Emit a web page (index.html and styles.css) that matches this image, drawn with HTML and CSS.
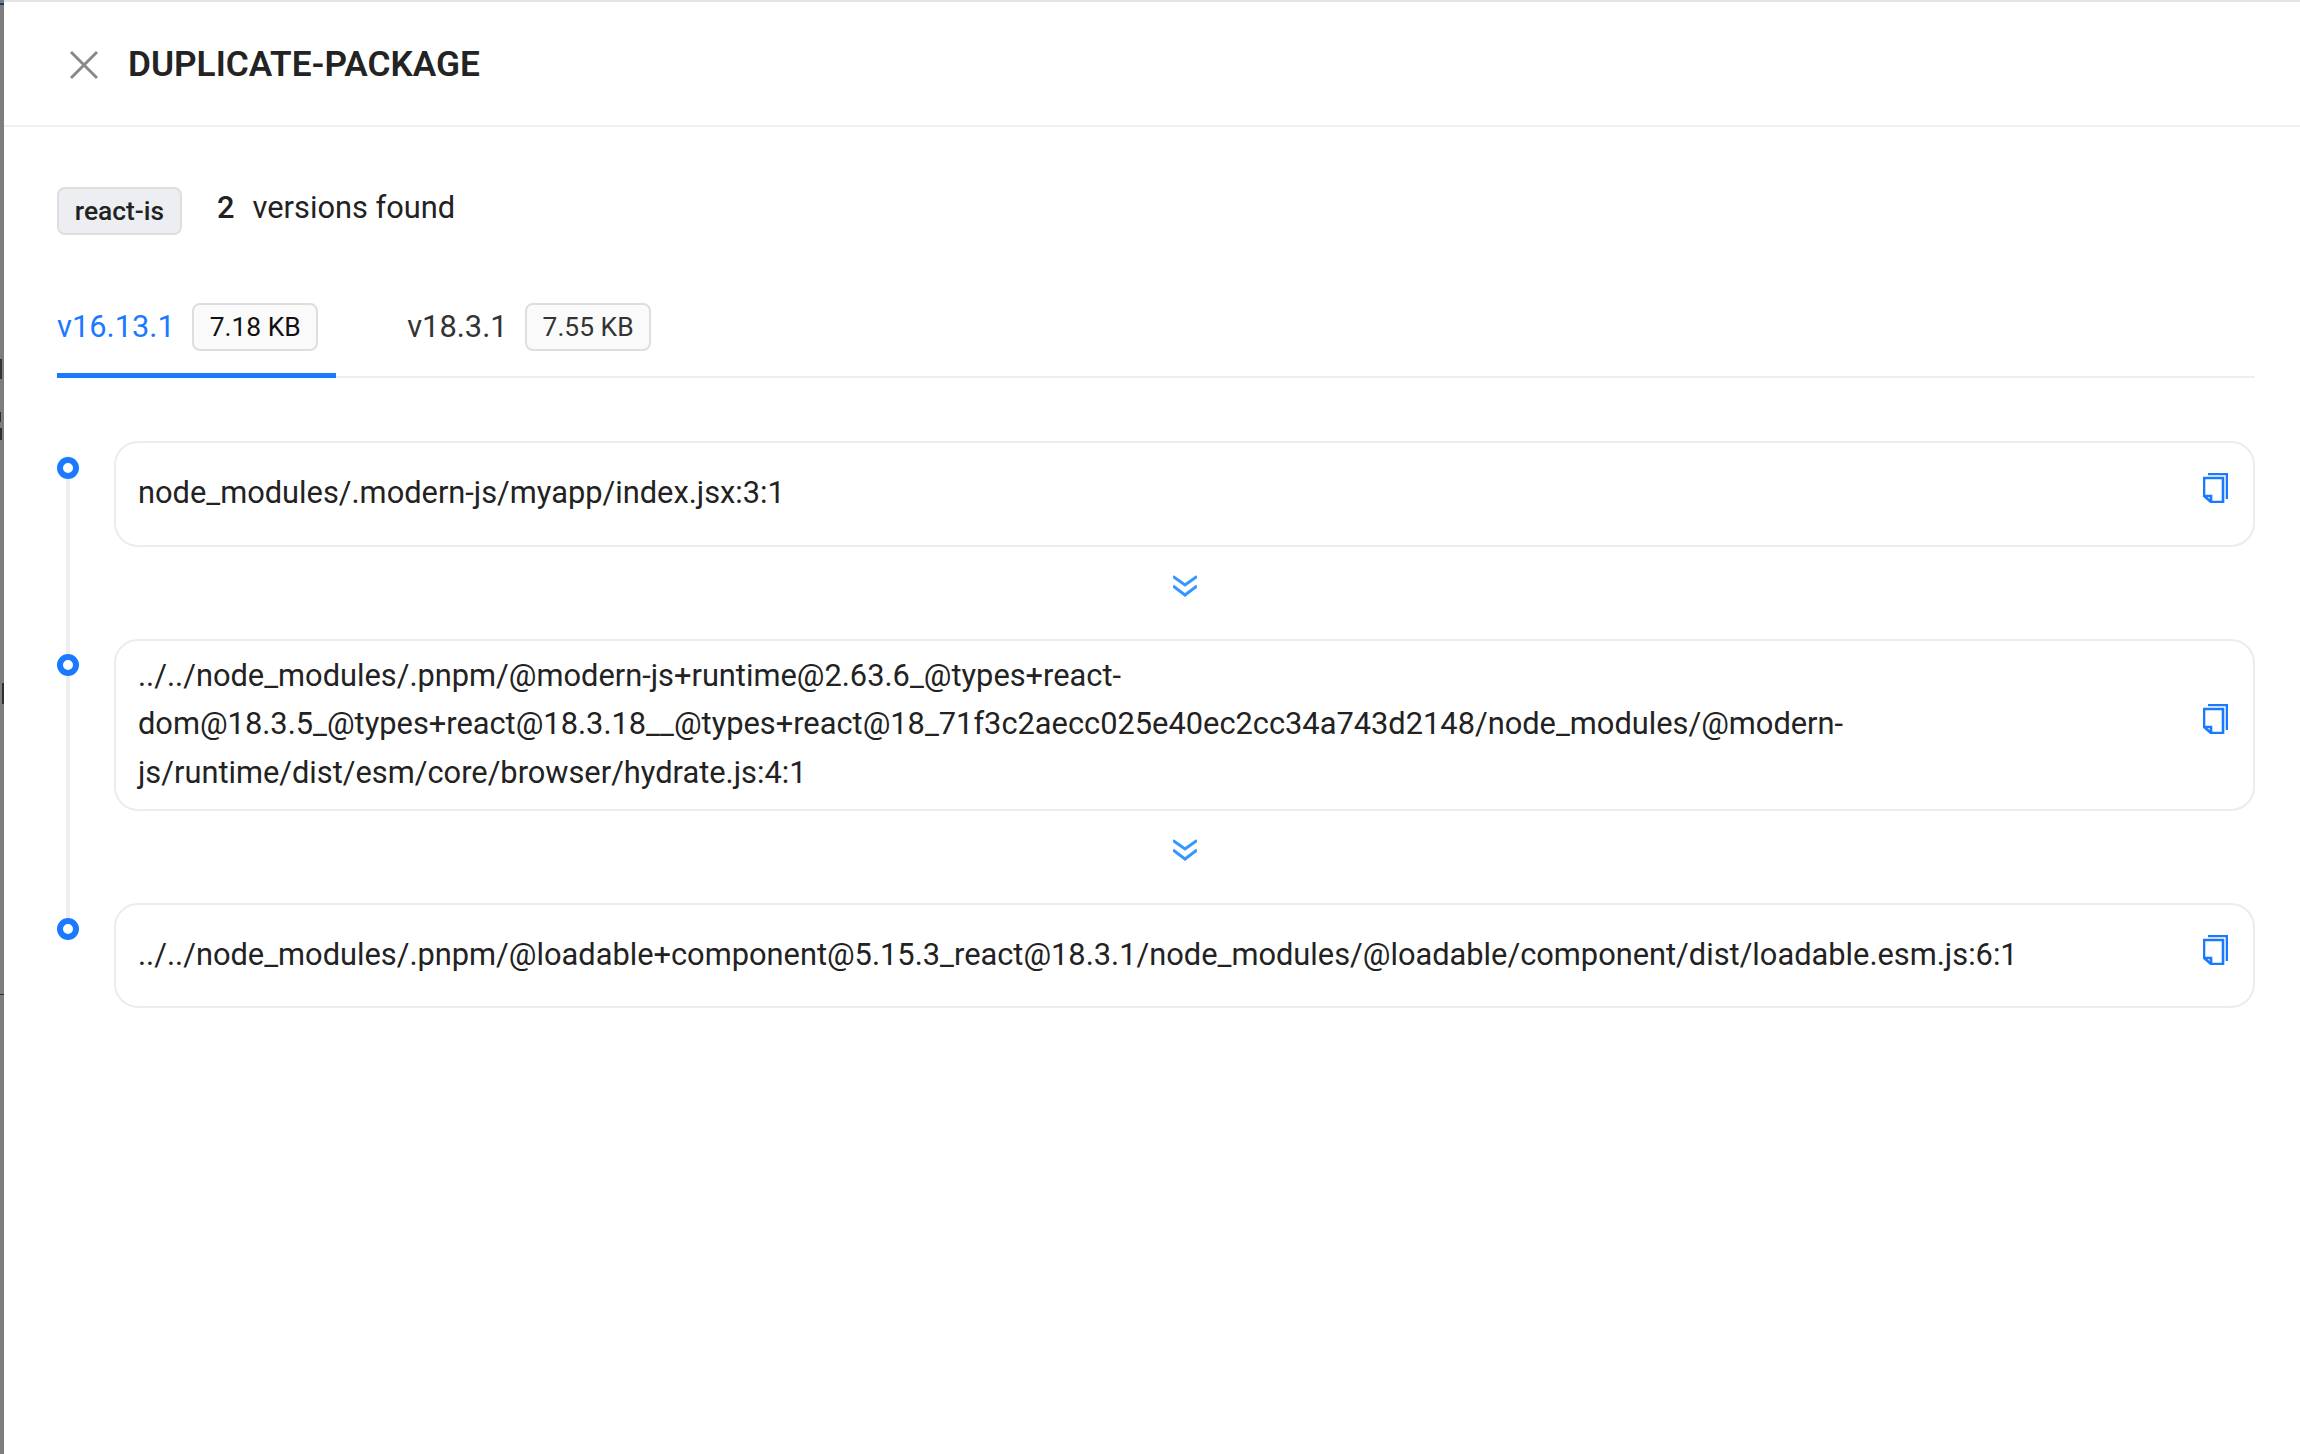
FILE: index.html
```html
<!DOCTYPE html>
<html lang="en">
<head>
<meta charset="utf-8">
<title>DUPLICATE-PACKAGE</title>
<link rel="stylesheet" href="styles.css">
</head>
<body>
<div class="page">
  <div class="backdrop">
    <i class="mark m-top"></i><i class="mark m-a"></i><i class="mark m-b"></i><i class="mark m-c"></i><i class="mark m-d"></i><i class="mark m-e"></i>
  </div>
  <main class="drawer">
    <header class="drawer-head">
      <svg class="close" viewBox="0 0 30 30" aria-hidden="true"><path d="M2 2 28 28M28 2 2 28"/></svg>
      <h1>DUPLICATE-PACKAGE</h1>
    </header>
    <section class="body">
      <div class="summary">
        <span class="tag name">react-is</span>
        <span class="count"><b>2</b>versions found</span>
      </div>
      <nav class="tabs">
        <div class="tab active"><span>v16.13.1</span><span class="tag size">7.18 KB</span></div>
        <div class="tab"><span>v18.3.1</span><span class="tag size">7.55 KB</span></div>
      </nav>
      <ol class="timeline">
        <li class="step">
          <div class="card"><p>node_modules/.modern-js/myapp/index.jsx:3:1</p>
            <svg class="copy" viewBox="0 0 25 30" aria-hidden="true"><path d="M5 1H24V26"/><path d="M1 5H20V29H8L1 23ZM1 23H8V29"/></svg>
          </div>
          <svg class="chev" viewBox="0 0 24 22" aria-hidden="true"><path d="M0 1.500 12 10 24 1.500M0 11 12 20 24 11"/></svg>
        </li>
        <li class="step">
          <div class="card"><p>../../node_modules/.pnpm/@modern-js+runtime@2.63.6_@types+react-<br>dom@18.3.5_@types+react@18.3.18__@types+react@18_71f3c2aecc025e40ec2cc34a743d2148/node_modules/@modern-<br>js/runtime/dist/esm/core/browser/hydrate.js:4:1</p>
            <svg class="copy" viewBox="0 0 25 30" aria-hidden="true"><path d="M5 1H24V26"/><path d="M1 5H20V29H8L1 23ZM1 23H8V29"/></svg>
          </div>
          <svg class="chev" viewBox="0 0 24 22" aria-hidden="true"><path d="M0 1.500 12 10 24 1.500M0 11 12 20 24 11"/></svg>
        </li>
        <li class="step last">
          <div class="card"><p>../../node_modules/.pnpm/@loadable+component@5.15.3_react@18.3.1/node_modules/@loadable/component/dist/loadable.esm.js:6:1</p>
            <svg class="copy" viewBox="0 0 25 30" aria-hidden="true"><path d="M5 1H24V26"/><path d="M1 5H20V29H8L1 23ZM1 23H8V29"/></svg>
          </div>
        </li>
      </ol>
    </section>
  </main>
</div>
</body>
</html>
```
FILE: styles.css
```css
* { box-sizing: border-box; }
html, body { margin: 0; height: 100%; }
body { font-family: Roboto, "Liberation Sans", sans-serif; color: #222; background: #fff; }
.page { display: flex; width: 2300px; height: 1454px; overflow: hidden; }
.backdrop { position: relative; width: 4px; flex: none; background: #7d7d7d; }
.mark { position: absolute; left: 0; width: 4px; background: #2e2e2e; }
.m-top { top: 3px; height: 2px; background: #123f73; }
.m-a { top: 359px; height: 20px; width: 2px; background: #333; }
.m-b { top: 412px; height: 10px; width: 1px; }
.m-c { top: 428px; height: 12px; width: 2px; }
.m-d { top: 683px; left: 2px; height: 21px; width: 2px; }
.m-e { top: 994px; height: 1px; }
.drawer { flex: 1; min-width: 0; display: flex; flex-direction: column; border-top: 2px solid #e4e4e4; background: #fff; }
.drawer-head { flex: none; height: 125px; display: flex; align-items: center; padding: 1px 0 0 65px; gap: 29px; border-bottom: 2px solid #f0f0f0; }
.close { width: 30px; height: 30px; flex: none; margin-top: 2px; fill: none; stroke: #8a8a8a; stroke-width: 3; }
.drawer-head h1 { margin: 0; font-size: 35.2px; font-weight: 600; line-height: 44px; color: #232323; }
.body { padding: 60px 45px 0 53px; }
.summary { display: flex; align-items: flex-start; height: 48px; }
.tag { display: inline-flex; align-items: center; justify-content: center; height: 48px; border: 2px solid #dedede; border-radius: 8px; font-size: 26.4px; }
.name { width: 125px; background: #eceef2; font-weight: 500; }
.count { margin-left: 35px; font-size: 30.8px; line-height: 42px; }
.count b { font-weight: 500; margin-right: 18px; }
.tabs { display: flex; margin-top: 68px; gap: 71px; height: 75px; border-bottom: 2px solid #eeeeee; }
.tab { display: flex; align-items: flex-start; gap: 17.5px; height: 75px; font-size: 30.8px; line-height: 47px; padding-right: 18px; color: #333; }
.tab.active { color: #1a7aff; border-bottom: 5px solid #1a7aff; }
.size { background: #fafafa; width: 126px; color: #333; }
.active .size { color: #111; }
.timeline { list-style: none; margin: 63px 0 0; padding: 0; }
.step { display: flow-root; position: relative; padding-left: 57px; }
.step::before { content: ""; position: absolute; left: 9px; top: 15px; bottom: -15px; width: 4px; background: #eee; }
.step.last::before { display: none; }
.step::after { content: ""; box-sizing: border-box; position: absolute; left: 0; top: 15.5px; width: 22px; height: 22px; border: 6px solid #1a7aff; border-radius: 50%; background: #fff; }
.card { display: flex; align-items: center; justify-content: space-between; min-height: 105.5px; border: 2px solid #e9ecf1; border-radius: 24px; padding: 11px 25px 11px 22px; font-size: 30.8px; line-height: 48.7px; color: #222; }
.card p { margin: 0; }
.copy { width: 25px; height: 30px; flex: none; fill: none; stroke: #1a7aff; stroke-width: 2.6; margin-top: -11px; }
.chev { display: block; width: 24px; height: 22px; margin: 28.5px auto 41.5px; fill: none; stroke: #3496ff; stroke-width: 3; }
```
